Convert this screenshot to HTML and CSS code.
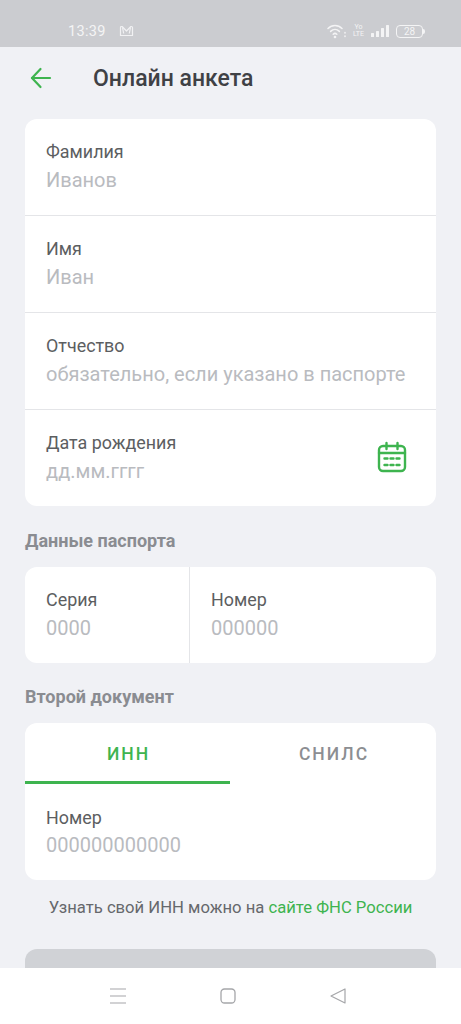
FILE: index.html
```html
<!DOCTYPE html>
<html lang="ru">

<head>
    <meta charset="UTF-8" />
    <meta name="viewport" content="width=device-width, initial-scale=1.0" />
    <title>Онлайн анкета</title>
    <link rel="stylesheet" href="styles.css">
</head>

<body>
    <div class="screen">
        <!-- Status bar -->
        <div class="status-bar">
            <span class="time">13:39</span>
            <svg class="mail-icon" width="15" height="12" viewBox="0 0 15 12" fill="none" stroke="#f1f1f3" stroke-width="1.2" stroke-linejoin="round">
                <path d="M1.500 10.500V2.500q0-1 1-1h.6L7.500 6l4.400-4.500h.6q1 0 1 1v8z" />
                <path d="M3.500 2.500l1.200 6M11.500 2.500l-1.200 6" />
            </svg>
            <div class="status-icons">
                <svg width="20" height="16" viewBox="0 0 20 16" fill="none" stroke="#f4f4f5" stroke-width="1.5" stroke-linecap="round">
                    <path d="M1 5.500c4-4 10-4 14 0" />
                    <path d="M3.600 8.400c2.600-2.500 6.200-2.500 8.800 0" />
                    <path d="M6.200 11.200c1.100-1 2.500-1 3.600 0" />
                    <circle cx="8" cy="14" r="0.6" />
                    <path d="M18 9.500v.4M18 13v.4" />
                </svg>
                <span class="volte">Yo<br>LTE</span>
                <svg width="20" height="14" viewBox="0 0 20 14" fill="#f4f4f5">
                    <rect x="1" y="9" width="3" height="4" rx="0.5" />
                    <rect x="6" y="7" width="3" height="6" rx="0.5" />
                    <rect x="11" y="4" width="3" height="9" rx="0.5" />
                    <rect x="16" y="1" width="3" height="12" rx="0.5" />
                </svg>
                <span class="battery">28</span>
            </div>
        </div>

        <!-- Header -->
        <div class="header">
            <svg class="back-icon" width="22" height="22" viewBox="0 0 22 22" fill="none" stroke="#3eb44f" stroke-width="2.2" stroke-linecap="round" stroke-linejoin="round">
                <path d="M2 11h18" />
                <path d="M10.500 2L2 11l8.500 9" />
            </svg>
            <h1>Онлайн анкета</h1>
        </div>

        <!-- Name card -->
        <div class="card">
            <div class="field row-line">
                <div class="label">Фамилия</div>
                <div class="hint">Иванов</div>
            </div>
            <div class="field row-line">
                <div class="label">Имя</div>
                <div class="hint">Иван</div>
            </div>
            <div class="field row-line">
                <div class="label">Отчество</div>
                <div class="hint">обязательно, если указано в паспорте</div>
            </div>
            <div class="field date-field">
                <div>
                    <div class="label">Дата рождения</div>
                    <div class="hint">дд.мм.гггг</div>
                </div>
                <svg class="calendar-icon" width="30" height="32" viewBox="0 0 30 32" fill="none" stroke="#3eb44f" stroke-width="2.4" stroke-linecap="round">
                    <rect x="2" y="5" width="26" height="25" rx="4" />
                    <path d="M2 12h26" />
                    <path d="M9.500 2v6M20.500 2v6" />
                    <path d="M7.500 17.500h3M13.500 17.500h3M19.500 17.500h3M7.500 24h3M13.500 24h3M19.500 24h3" />
                </svg>
            </div>
        </div>

        <div class="section-title">Данные паспорта</div>
        <div class="card passport">
            <div class="field passport-left">
                <div class="label">Серия</div>
                <div class="hint">0000</div>
            </div>
            <div class="field">
                <div class="label">Номер</div>
                <div class="hint">000000</div>
            </div>
        </div>

        <div class="section-title second">Второй документ</div>
        <div class="card">
            <div class="tabs">
                <div class="tab active">ИНН</div>
                <div class="tab">СНИЛС</div>
            </div>
            <div class="field doc-field">
                <div class="label">Номер</div>
                <div class="hint">000000000000</div>
            </div>
        </div>

        <p class="note">Узнать свой ИНН можно на <a href="#">сайте ФНС России</a></p>

        <div class="submit"></div>

        <!-- Navigation bar -->
        <div class="nav-bar">
            <svg width="18" height="18" viewBox="0 0 18 18" fill="none" stroke="#a5a6a9" stroke-width="1.200">
                <path d="M1 2h16M1 9h16M1 16h16" />
            </svg>
            <svg width="18" height="18" viewBox="0 0 18 18" fill="none" stroke="#a5a6a9" stroke-width="1.300">
                <rect x="2" y="2" width="14" height="14" rx="3.500" />
            </svg>
            <svg width="18" height="18" viewBox="0 0 18 18" fill="none" stroke="#a5a6a9" stroke-width="1.200" stroke-linejoin="round">
                <path d="M16 2v14L2 9z" />
            </svg>
        </div>
    </div>
</body>

</html>
```

FILE: styles.css
```css
* {
    box-sizing: border-box;
}

body {
    margin: 0;
    font-family: Roboto, "Noto Sans", sans-serif;
    background-color: #f0f1f5;
    color: #46484b;
}

.screen {
    position: relative;
    width: 461px;
    height: 1024px;
    overflow: hidden;
    background-color: #f0f1f5;
}

.status-bar {
    display: flex;
    align-items: center;
    height: 47px;
    padding: 15px 38px 0 68px;
    background-color: #cbccd0;
    color: #f4f4f5;
}

.time {
    font-size: 14.500px;
    letter-spacing: 0.300px;
}

.mail-icon {
    margin-left: 13px;
}

.status-icons {
    display: flex;
    align-items: center;
    gap: 6px;
    margin-left: auto;
}

.volte {
    font-size: 7px;
    line-height: 7px;
    text-align: center;
}

.battery {
    position: relative;
    width: 27px;
    height: 13px;
    border: 1px solid #f4f4f5;
    border-radius: 4px;
    font-size: 10px;
    line-height: 11px;
    text-align: center;
}

.battery::after {
    content: "";
    position: absolute;
    top: 3px;
    right: -3px;
    width: 2px;
    height: 5px;
    border-radius: 0 2px 2px 0;
    background-color: #f4f4f5;
}

.header {
    display: flex;
    align-items: center;
    height: 72px;
    padding: 0 0 10px 30px;
}

.back-icon {
    flex-shrink: 0;
}

.header h1 {
    margin: 0 0 0 41px;
    font-size: 23px;
    font-weight: 500;
    color: #3f4145;
}

.card {
    margin: 0 25px;
    background-color: #fff;
    border-radius: 12px;
    overflow: hidden;
}

.field {
    height: 96px;
    padding: 22px 21px 0;
}

.row-line {
    height: 97px;
    border-bottom: 1px solid #e4e5e8;
}

.label {
    font-size: 17.900px;
    line-height: 22px;
    color: #5c5e61;
}

.hint {
    margin-top: 6px;
    font-size: 20px;
    line-height: 22px;
    color: #b9bbbf;
}

.date-field {
    display: flex;
    justify-content: space-between;
    padding: 22px 29px 0 21px;
}

.calendar-icon {
    margin-top: 9px;
}

.section-title {
    margin: 25px 25px 16px;
    font-size: 18px;
    font-weight: 700;
    line-height: 20px;
    color: #8a8c91;
}

.section-title.second {
    margin-top: 24px;
}

.passport {
    display: flex;
    height: 96px;
}

.passport .field {
    flex: 1;
    height: 96px;
}

.passport .passport-left {
    flex: 0 0 165px;
    border-right: 1px solid #e4e5e8;
}

.tabs {
    display: flex;
}

.tab {
    flex: 1;
    height: 61px;
    padding-top: 20px;
    padding-left: 2px;
    font-size: 17.500px;
    font-weight: 500;
    line-height: 22px;
    letter-spacing: 2px;
    text-align: center;
    color: #8c8e92;
}

.tab.active {
    flex: 0 0 205px;
    color: #3eb44f;
    border-bottom: 3px solid #3eb44f;
}

.doc-field {
    padding-top: 23px;
}

.doc-field .hint {
    margin-top: 5px;
}

.note {
    margin: 18px 0 0;
    font-size: 16.650px;
    line-height: 20px;
    text-align: center;
    color: #66686c;
}

.note a {
    color: #3eb44f;
    text-decoration: none;
}

.submit {
    height: 60px;
    margin: 31px 25px 0;
    background-color: #d0d2d6;
    border-radius: 12px;
}

.nav-bar {
    position: absolute;
    left: 0;
    bottom: 0;
    display: flex;
    justify-content: space-between;
    align-items: flex-start;
    width: 461px;
    height: 56px;
    padding: 19px 114px 0 109px;
    background-color: #fff;
}
```
